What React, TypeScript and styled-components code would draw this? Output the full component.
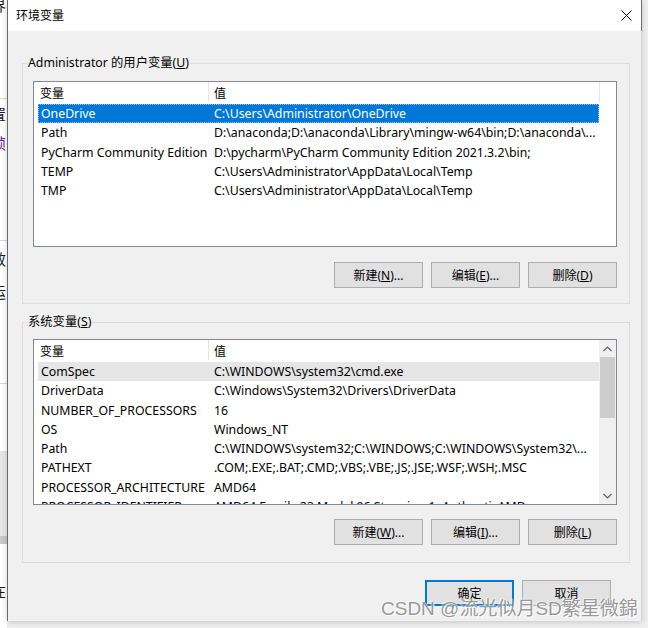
import React from 'react';
import styled, { createGlobalStyle } from 'styled-components';

const FONT = `"Noto Sans", "Noto Sans CJK SC", sans-serif`;

const GlobalStyle = createGlobalStyle`
  html, body { margin: 0; padding: 0; }
  body { background: #efefef; font-family: ${FONT}; }
  * { box-sizing: border-box; }
`;

const Page = styled.div`
  position: relative;
  width: 648px;
  height: 628px;
  overflow: hidden;
  display: flex;
  align-items: flex-start;
  background: #efefef;
`;

const Strip = styled.div`
  width: 7px;
  height: 628px;
  flex: none;
  overflow: hidden;
  background: #fff;
  display: flex;
  flex-direction: column;
`;

const StripRow = styled.div<{ $h: number; $bg?: string; $line?: boolean; $color?: string }>`
  height: ${p => p.$h}px;
  flex: none;
  background: ${p => p.$bg || 'transparent'};
  border-bottom: ${p => (p.$line ? '1px solid #d6d6d6' : 'none')};
  display: flex;
  align-items: center;
  white-space: nowrap;
  font-family: "Noto Sans CJK SC", sans-serif;
  font-size: 15px;
  line-height: 15px;
  color: ${p => p.$color || '#1a1a1a'};
  overflow: hidden;
`;

const StripGlyph = styled.span`
  margin-left: -9px;
`;

const Dialog = styled.div`
  width: 635px;
  height: 621px;
  flex: none;
  display: flex;
  flex-direction: column;
  border-left: 1px solid #6a6a6a;
  box-shadow: 0 1px 6px rgba(0, 0, 0, 0.18);
`;

const TitleBar = styled.div`
  height: 31px;
  flex: none;
  background: #fff;
  border-right: 1px solid #6f6f6f;
  display: flex;
  align-items: center;
  justify-content: space-between;
  padding-left: 8px;
`;

const TitleText = styled.span`
  font-size: 12px;
  line-height: 16px;
  color: #000;
`;

const CloseButton = styled.div`
  width: 30px;
  height: 31px;
  display: flex;
  align-items: center;
  justify-content: center;
`;

const Body = styled.div`
  flex: 1;
  background: #f0f0f0;
  border-right: 1px solid #d4d4d4;
  padding: 24px 11px 15px 14px;
  display: flex;
  flex-direction: column;
`;

const GroupBox = styled.fieldset<{ $mt?: number }>`
  margin: ${p => p.$mt || 0}px 0 0 0;
  padding: 0 12px 0 4px;
  border: 1px solid #dcdcdc;
  min-width: 0;
`;

const Legend = styled.legend`
  padding: 0 1px;
  font-size: 12.3px;
  line-height: 16px;
  color: #000;
`;

const GroupInner = styled.div<{ $pt: number; $pb: number }>`
  padding: ${p => p.$pt}px 0 ${p => p.$pb}px 6px;
  display: flex;
  flex-direction: column;
`;

const ListView = styled.div`
  height: 166px;
  border: 1px solid #828790;
  background: #fff;
  display: flex;
  overflow: hidden;
`;

const ListMain = styled.div`
  flex: 1;
  min-width: 0;
  display: flex;
  flex-direction: column;
  overflow: hidden;
`;

const Header = styled.div`
  height: 22px;
  flex: none;
  display: flex;
  padding-bottom: 2px;
`;

const HeaderCell = styled.div<{ $w: number; $pl: number }>`
  width: ${p => p.$w}px;
  flex: none;
  height: 20px;
  border-right: 1px solid #e5e5e5;
  padding: 2px 0 0 ${p => p.$pl}px;
  display: flex;
  align-items: center;
  font-size: 12px;
  color: #000;
`;

const Row = styled.div<{ $state?: 'selected' | 'inactive' }>`
  height: 19.25px;
  flex: none;
  width: 561px;
  margin-left: 4px;
  display: grid;
  grid-template-columns: 171px 1fr;
  align-items: center;
  font-size: 12.3px;
  line-height: 19px;
  background: ${p =>
    p.$state === 'selected' ? '#0078d7' : p.$state === 'inactive' ? '#e6e6e6' : 'transparent'};
  color: ${p => (p.$state === 'selected' ? '#fff' : '#000')};
  outline: ${p => (p.$state === 'selected' ? '1px dotted #9cc3e8' : 'none')};
  outline-offset: -1px;
`;

const Cell = styled.div<{ $pl: number }>`
  padding-left: ${p => p.$pl}px;
  white-space: nowrap;
  overflow: hidden;
`;

const ScrollBar = styled.div`
  width: 17px;
  flex: none;
  background: #f0f0f0;
  display: flex;
  flex-direction: column;
`;

const ArrowBox = styled.div`
  height: 17px;
  flex: none;
  display: flex;
  align-items: center;
  justify-content: center;
`;

const Thumb = styled.div`
  height: 61px;
  margin: 0 1px;
  flex: none;
  background: #cdcdcd;
`;

const Track = styled.div`
  flex: 1;
`;

const ButtonRow = styled.div<{ $mt: number; $pr?: number; $gap: number }>`
  margin-top: ${p => p.$mt}px;
  padding-right: ${p => p.$pr || 0}px;
  display: flex;
  justify-content: flex-end;
  gap: ${p => p.$gap}px;
`;

const Button = styled.button<{ $default?: boolean }>`
  width: 89px;
  height: 26px;
  margin: 0;
  padding: 0;
  background: #e1e1e1;
  border: ${p => (p.$default ? '2px solid #0078d7' : '1px solid #adadad')};
  font-family: ${FONT};
  font-size: 12px;
  color: #000;
  display: flex;
  align-items: center;
  justify-content: center;
`;

const Watermark = styled.div`
  position: absolute;
  left: 381px;
  top: 597px;
  font-family: "Liberation Sans", "Noto Sans CJK SC", sans-serif;
  font-size: 19px;
  line-height: 24px;
  white-space: nowrap;
  color: rgba(140, 140, 140, 0.9);
  text-shadow: 1px 1px 1px rgba(255, 255, 255, 0.95), -1px -1px 1px rgba(255, 255, 255, 0.6);
`;

type Item = { name: string; value: string; state?: 'selected' | 'inactive' };

const userVars: Item[] = [
  { name: 'OneDrive', value: 'C:\\Users\\Administrator\\OneDrive', state: 'selected' },
  { name: 'Path', value: 'D:\\anaconda;D:\\anaconda\\Library\\mingw-w64\\bin;D:\\anaconda\\...' },
  { name: 'PyCharm Community Edition', value: 'D:\\pycharm\\PyCharm Community Edition 2021.3.2\\bin;' },
  { name: 'TEMP', value: 'C:\\Users\\Administrator\\AppData\\Local\\Temp' },
  { name: 'TMP', value: 'C:\\Users\\Administrator\\AppData\\Local\\Temp' },
];

const sysVars: Item[] = [
  { name: 'ComSpec', value: 'C:\\WINDOWS\\system32\\cmd.exe', state: 'inactive' },
  { name: 'DriverData', value: 'C:\\Windows\\System32\\Drivers\\DriverData' },
  { name: 'NUMBER_OF_PROCESSORS', value: '16' },
  { name: 'OS', value: 'Windows_NT' },
  { name: 'Path', value: 'C:\\WINDOWS\\system32;C:\\WINDOWS;C:\\WINDOWS\\System32\\...' },
  { name: 'PATHEXT', value: '.COM;.EXE;.BAT;.CMD;.VBS;.VBE;.JS;.JSE;.WSF;.WSH;.MSC' },
  { name: 'PROCESSOR_ARCHITECTURE', value: 'AMD64' },
  { name: 'PROCESSOR_IDENTIFIER', value: 'AMD64 Family 23 Model 96 Stepping 1, AuthenticAMD' },
];

const Chevron = ({ up }: { up?: boolean }) => (
  <svg width="9" height="6" viewBox="0 0 9 6">
    <polyline
      points={up ? '0.5,5 4.5,1 8.5,5' : '0.5,1 4.5,5 8.5,1'}
      fill="none"
      stroke="#606060"
      strokeWidth="1.2"
    />
  </svg>
);

const List = ({ items, scroll }: { items: Item[]; scroll?: boolean }) => (
  <ListView>
    <ListMain>
      <Header>
        <HeaderCell $w={175} $pl={6}>变量</HeaderCell>
        <HeaderCell $w={391} $pl={5}>值</HeaderCell>
      </Header>
      {items.map((it, i) => (
        <Row key={i} $state={it.state}>
          <Cell $pl={3}>{it.name}</Cell>
          <Cell $pl={5}>{it.value}</Cell>
        </Row>
      ))}
    </ListMain>
    {scroll && (
      <ScrollBar>
        <ArrowBox><Chevron up /></ArrowBox>
        <Thumb />
        <Track />
        <ArrowBox><Chevron /></ArrowBox>
      </ScrollBar>
    )}
  </ListView>
);

export default function App() {
  return (
    <>
      <GlobalStyle />
      <Page>
        <Strip>
          <StripRow $h={14}><StripGlyph style={{ marginTop: -6 }}>界</StripGlyph></StripRow>
          <StripRow $h={85} $line />
          <StripRow $h={28}><StripGlyph>置</StripGlyph></StripRow>
          <StripRow $h={30} $color="#5b2a86"><StripGlyph>帧</StripGlyph></StripRow>
          <StripRow $h={84} $line />
          <StripRow $h={35}><StripGlyph>效</StripGlyph></StripRow>
          <StripRow $h={30}><StripGlyph>运</StripGlyph></StripRow>
          <StripRow $h={78} $line />
          <StripRow $h={67} />
          <StripRow $h={85} $bg="#e6e6e6" />
          <StripRow $h={8} $bg="#c9c9c9" />
          <StripRow $h={38} />
          <StripRow $h={16}><StripGlyph>在</StripGlyph></StripRow>
          <StripRow $h={40} />
        </Strip>
        <Dialog>
          <TitleBar>
            <TitleText>环境变量</TitleText>
            <CloseButton>
              <svg width="11" height="11" viewBox="0 0 11 11">
                <path d="M0.5 0.5 L10.5 10.5 M10.5 0.5 L0.5 10.5" stroke="#000" strokeWidth="1" />
              </svg>
            </CloseButton>
          </TitleBar>
          <Body>
            <GroupBox>
              <Legend>Administrator 的用户变量(<u>U</u>)</Legend>
              <GroupInner $pt={10} $pb={15}>
                <List items={userVars} />
                <ButtonRow $mt={15} $gap={8}>
                  <Button>新建(<u>N</u>)...</Button>
                  <Button>编辑(<u>E</u>)...</Button>
                  <Button>删除(<u>D</u>)</Button>
                </ButtonRow>
              </GroupInner>
            </GroupBox>
            <GroupBox $mt={10}>
              <Legend>系统变量(<u>S</u>)</Legend>
              <GroupInner $pt={9} $pb={17}>
                <List items={sysVars} scroll />
                <ButtonRow $mt={14} $gap={8}>
                  <Button>新建(<u>W</u>)...</Button>
                  <Button>编辑(<u>I</u>)...</Button>
                  <Button>删除(<u>L</u>)</Button>
                </ButtonRow>
              </GroupInner>
            </GroupBox>
            <ButtonRow $mt={17} $pr={19} $gap={8}>
              <Button $default>确定</Button>
              <Button>取消</Button>
            </ButtonRow>
          </Body>
        </Dialog>
        <Watermark>CSDN @流光似月SD繁星微錦</Watermark>
      </Page>
    </>
  );
}
